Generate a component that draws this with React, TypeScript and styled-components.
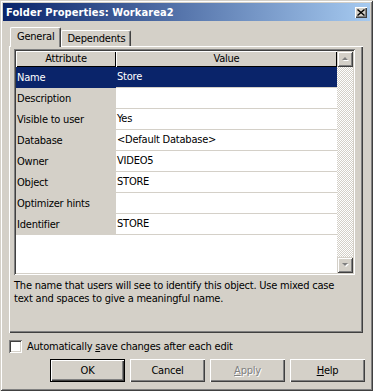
import React from "react";
import styled, { createGlobalStyle, css } from "styled-components";

const GlobalStyle = createGlobalStyle`
  html, body { margin: 0; padding: 0; background: #d4d0c8; }
  body { font-family: "DejaVu Sans Condensed", "Liberation Sans", Arial, sans-serif; font-size: 11px; color: #000; letter-spacing: -0.22px; }
  * { box-sizing: border-box; }
`;

const raised = css`
  box-shadow: inset 1px 1px #ffffff, inset -1px -1px #404040, inset -2px -2px #808080;
`;

const sunken = css`
  box-shadow: inset 1px 1px #808080, inset -1px -1px #ffffff, inset 2px 2px #404040, inset -2px -2px #d4d0c8;
`;

const Window = styled.div`
  width: 373px;
  height: 391px;
  padding: 3px;
  background: #d4d0c8;
  display: flex;
  flex-direction: column;
  box-shadow: inset 1px 1px #d4d0c8, inset -1px -1px #404040, inset 2px 2px #ffffff, inset -2px -2px #808080;
`;

const TitleBar = styled.div`
  height: 18px;
  display: flex;
  align-items: center;
  padding: 0 3px 0 3px;
  background: linear-gradient(to right, #0a246a, #a6caf0);
  color: #fff;
  font-weight: bold;
  font-size: 11px;
  letter-spacing: 0.1px;
`;

const TitleText = styled.span`
  flex: 1;
  white-space: nowrap;
`;

const CloseButton = styled.div`
  width: 12px;
  height: 11px;
  background: #d4d0c8;
  ${raised};
  display: flex;
  align-items: center;
  justify-content: center;
`;

const Body = styled.div`
  flex: 1;
  display: flex;
  flex-direction: column;
  padding: 6px 6px 0 6px;
`;

const TabStrip = styled.div`
  display: flex;
  align-items: flex-end;
  height: 19px;
  padding-left: 1px;
  position: relative;
  z-index: 1;
`;

const Tab = styled.div<{ $active?: boolean }>`
  height: ${(p) => (p.$active ? 20 : 16)}px;
  margin-bottom: ${(p) => (p.$active ? -1 : 0)}px;
  padding: ${(p) => (p.$active ? "2px 6px 0 6px" : "1px 5px 0 5px")};
  background: #d4d0c8;
  border-top: 1px solid #fff;
  border-left: 1px solid #fff;
  border-right: 1px solid #404040;
  box-shadow: inset -1px 0 #808080;
  border-radius: 2px 2px 0 0;
  display: flex;
  align-items: flex-start;
  white-space: nowrap;
`;

const Panel = styled.div`
  height: 287px;
  width: 354px;
  padding: 3px 8px 0 5px;
  ${raised};
  display: flex;
  flex-direction: column;
`;

const Grid = styled.div`
  height: 226px;
  padding: 2px;
  background: #fff;
  ${sunken};
  display: flex;
`;

const Table = styled.div`
  flex: 1;
  display: flex;
  flex-direction: column;
  background: #fff;
`;

const HeaderRow = styled.div`
  display: grid;
  grid-template-columns: 100px 1fr;
  height: 16px;
`;

const HeaderCell = styled.div`
  background: #d4d0c8;
  box-shadow: inset 1px 1px #ffffff, inset -1px -1px #000000;
  text-align: center;
  line-height: 15px;
`;

const Row = styled.div`
  display: grid;
  grid-template-columns: 100px 1fr;
  height: 21px;
`;

const AttrCell = styled.div<{ $selected?: boolean }>`
  background: ${(p) => (p.$selected ? "#0a246a" : "#d4d0c8")};
  color: ${(p) => (p.$selected ? "#fff" : "#000")};
  padding-left: 1px;
  line-height: 21px;
  white-space: nowrap;
  overflow: hidden;
`;

const ValueCell = styled.div<{ $selected?: boolean }>`
  background: ${(p) => (p.$selected ? "#0a246a" : "#fff")};
  color: ${(p) => (p.$selected ? "#fff" : "#000")};
  border-bottom: 1px solid #d4d0c8;
  padding-left: 1px;
  line-height: 20px;
  white-space: nowrap;
  overflow: hidden;
`;

const ScrollBar = styled.div`
  width: 16px;
  display: flex;
  flex-direction: column;
  background: repeating-conic-gradient(#d4d0c8 0% 25%, #ffffff 0% 50%) 0 0 / 2px 2px;
`;

const ScrollButton = styled.div`
  width: 16px;
  height: 16px;
  background: #d4d0c8;
  box-shadow: inset 1px 1px #d4d0c8, inset -1px -1px #404040, inset 2px 2px #ffffff, inset -2px -2px #808080;
  display: flex;
  align-items: center;
  justify-content: center;
`;

const Track = styled.div`
  flex: 1;
`;

const Hint = styled.div`
  margin-top: 4px;
  line-height: 13px;
`;

const CheckRow = styled.label`
  display: flex;
  align-items: center;
  gap: 5px;
  margin-top: 7px;
  height: 13px;
`;

const CheckBox = styled.span`
  width: 13px;
  height: 13px;
  background: #fff;
  ${sunken};
`;

const ButtonRow = styled.div`
  display: flex;
  justify-content: flex-end;
  gap: 5px;
  margin-top: 6px;
  margin-right: -1px;
`;

const Button = styled.div<{ $default?: boolean; $disabled?: boolean }>`
  width: 75px;
  height: 23px;
  background: #d4d0c8;
  display: flex;
  align-items: center;
  justify-content: center;
  box-shadow: inset 1px 1px #ffffff, inset -1px -1px #404040, inset -2px -2px #808080;
  ${(p) =>
    p.$default &&
    css`
      border: 1px solid #000;
    `}
  ${(p) =>
    p.$disabled &&
    css`
      color: #808080;
      text-shadow: 1px 1px #ffffff;
    `}
`;

const U = styled.span`
  text-decoration: underline;
`;

const rows: [string, string][] = [
  ["Name", "Store"],
  ["Description", ""],
  ["Visible to user", "Yes"],
  ["Database", "<Default Database>"],
  ["Owner", "VIDEO5"],
  ["Object", "STORE"],
  ["Optimizer hints", ""],
  ["Identifier", "STORE"],
];

const Arrow = ({ up }: { up?: boolean }) => (
  <svg width="9" height="6" viewBox="0 0 9 6">
    {up ? (
      <>
        <path d="M2 5 L5 2 L8 5 Z" fill="#ffffff" />
        <path d="M1 4 L4 1 L7 4 Z" fill="#808080" />
      </>
    ) : (
      <>
        <path d="M2 2 L8 2 L5 5 Z" fill="#ffffff" />
        <path d="M1 1 L7 1 L4 4 Z" fill="#808080" />
      </>
    )}
  </svg>
);

export default function App() {
  return (
    <>
      <GlobalStyle />
      <Window>
        <TitleBar>
          <TitleText>Folder Properties: Workarea2</TitleText>
          <CloseButton>
            <svg width="8" height="7" viewBox="0 0 8 7">
              <path d="M0.5 0.5 L7.5 6.5 M7.5 0.5 L0.5 6.5" stroke="#000" strokeWidth="1.4" />
            </svg>
          </CloseButton>
        </TitleBar>
        <Body>
          <TabStrip>
            <Tab $active>General</Tab>
            <Tab>Dependents</Tab>
          </TabStrip>
          <Panel>
            <Grid>
              <Table>
                <HeaderRow>
                  <HeaderCell>Attribute</HeaderCell>
                  <HeaderCell>Value</HeaderCell>
                </HeaderRow>
                {rows.map(([a, v], i) => (
                  <Row key={a}>
                    <AttrCell $selected={i === 0}>{a}</AttrCell>
                    <ValueCell $selected={i === 0}>{v}</ValueCell>
                  </Row>
                ))}
              </Table>
              <ScrollBar>
                <ScrollButton>
                  <Arrow up />
                </ScrollButton>
                <Track />
                <ScrollButton>
                  <Arrow />
                </ScrollButton>
              </ScrollBar>
            </Grid>
            <Hint>
              The name that users will see to identify this object. Use mixed case
              <br />
              text and spaces to give a meaningful name.
            </Hint>
          </Panel>
          <CheckRow>
            <CheckBox />
            <span>
              Automatically <U>s</U>ave changes after each edit
            </span>
          </CheckRow>
          <ButtonRow>
            <Button $default>OK</Button>
            <Button>Cancel</Button>
            <Button $disabled>
              <span>
                <U>A</U>pply
              </span>
            </Button>
            <Button>
              <span>
                <U>H</U>elp
              </span>
            </Button>
          </ButtonRow>
        </Body>
      </Window>
    </>
  );
}
